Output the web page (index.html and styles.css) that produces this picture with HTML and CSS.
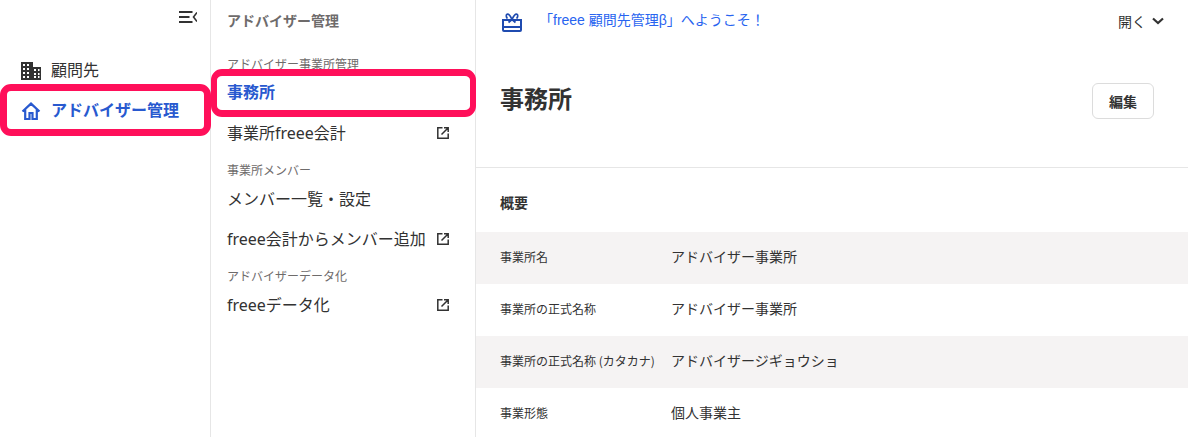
FILE: index.html
```html
<!DOCTYPE html>
<html lang="ja">
<head>
<meta charset="utf-8">
<title>事務所</title>
<link rel="stylesheet" href="styles.css">
</head>
<body>
<div class="app">
  <nav class="rail">
    <div class="rail-top">
      <svg class="collapse" width="18" height="14" viewBox="0 0 18 14"><path d="M0 2h13.500M0 7h10.500M0 12h13.500" stroke="#323232" stroke-width="2" fill="none"/><path d="M18 2.500 14.500 7l3.500 4.500" stroke="#323232" stroke-width="1.600" fill="none"/></svg>
    </div>
    <a class="rail-item">
      <svg class="rail-icon" width="20" height="18" viewBox="0 0 20 18"><path fill="#323232" fill-rule="evenodd" d="M0 0h12v5h8v13H0zM2 2v2h2V2zm4 0v2h2V2zM2 6v2h2V6zm4 0v2h2V6zm7 1v2h2V7zm4 0v2h1.500V7zM2 10v2h2v-2zm4 0v2h2v-2zm7 1v2h2v-2zm4 0v2h1.500v-2zM2 14v2h2v-2zm4 0v2h2v-2zm7 0v2h2v-2zm4 0v2h1.500v-2z"/></svg>
      <span>顧問先</span>
    </a>
    <a class="rail-item is-current">
      <svg class="rail-icon" width="20" height="18" viewBox="0 0 20 18"><path fill="none" stroke="#2859cf" stroke-width="2.200" d="M1.500 9.500 10 1.600l8.500 7.900M4.200 7.500V17h4.300v-6h3v6h4.300V7.500"/></svg>
      <span>アドバイザー管理</span>
    </a>
  </nav>
  <nav class="sub">
    <h2 class="sub-title">アドバイザー管理</h2>
    <p class="sub-group first">アドバイザー事業所管理</p>
    <a class="sub-item is-current"><span>事務所</span></a>
    <a class="sub-item"><span>事業所freee会計</span><svg class="ext" width="12" height="12" viewBox="0 0 12 12"><path d="M5.500.8H.8v10.400h10.400V6.500M7 .8h4.200V5M11 1 4.500 7.500" fill="none" stroke="#323232" stroke-width="1.500"/></svg></a>
    <p class="sub-group">事業所メンバー</p>
    <a class="sub-item"><span>メンバー一覧・設定</span></a>
    <a class="sub-item"><span>freee会計からメンバー追加</span><svg class="ext" width="12" height="12" viewBox="0 0 12 12"><path d="M5.500.8H.8v10.400h10.400V6.500M7 .8h4.200V5M11 1 4.500 7.500" fill="none" stroke="#323232" stroke-width="1.500"/></svg></a>
    <p class="sub-group">アドバイザーデータ化</p>
    <a class="sub-item"><span>freeeデータ化</span><svg class="ext" width="12" height="12" viewBox="0 0 12 12"><path d="M5.500.8H.8v10.400h10.400V6.500M7 .8h4.200V5M11 1 4.500 7.500" fill="none" stroke="#323232" stroke-width="1.500"/></svg></a>
  </nav>
  <main class="main">
    <div class="notice">
      <svg class="notice-icon" width="20" height="19" viewBox="0 0 20 19"><path fill="none" stroke="#1f4bb0" stroke-width="2" d="M1 7h18v10a1 1 0 0 1-1 1H2a1 1 0 0 1-1-1z"/><path fill="#1f4bb0" d="M1 13h18v2H1z"/><path fill="none" stroke="#1f4bb0" stroke-width="1.700" d="M10 6.500C8 2 6 .8 5 1.200S4 4.500 5.500 5.500M10 6.500C12 2 14 .8 15 1.200s1 3.300-.5 4.300M10 6.500 6.500 9.500M10 6.500l3.500 3"/></svg>
      <a class="notice-text">「freee 顧問先管理β」へようこそ！</a>
      <span class="notice-open">開く<svg width="12" height="8" viewBox="0 0 12 8"><path d="M1 1.500 6 6l5-4.500" fill="none" stroke="#323232" stroke-width="2.200"/></svg></span>
    </div>
    <header class="head">
      <h1>事務所</h1>
      <button class="edit">編集</button>
    </header>
    <section class="overview">
      <h3>概要</h3>
      <dl class="rows">
        <div class="row"><dt>事業所名</dt><dd>アドバイザー事業所</dd></div>
        <div class="row"><dt>事業所の正式名称</dt><dd>アドバイザー事業所</dd></div>
        <div class="row"><dt>事業所の正式名称 (カタカナ)</dt><dd>アドバイザージギョウショ</dd></div>
        <div class="row"><dt>事業形態</dt><dd>個人事業主</dd></div>
      </dl>
    </section>
  </main>
  <div class="mark mark-rail"></div>
  <div class="mark mark-sub"></div>
</div>
</body>
</html>
```

FILE: styles.css
```css
* { box-sizing: border-box; }
html, body { margin: 0; height: 100%; overflow: hidden; background: #fff; }
body { font-family: "Noto Sans CJK JP", "Noto Sans", sans-serif; color: #323232; }
.app { position: relative; display: flex; height: 437px; overflow: hidden; }

.rail { width: 211px; flex: none; border-right: 1px solid #e6e6e6; }
.rail-top { height: 51px; display: flex; justify-content: flex-end; padding: 10px 13px 0 0; }
.collapse { display: block; }
.rail-item { display: flex; align-items: center; gap: 10px; height: 36px; padding-left: 21px; font-size: 16px; margin-bottom: 4px; }
.rail-item.is-current { color: #2859cf; font-weight: 700; margin-top: 4px; }
.rail-icon { margin-top: 3px; }

.sub { width: 265px; flex: none; border-right: 1px solid #e6e6e6; padding: 10px 26px 0 16px; }
.sub-title { margin: 0 0 24px; font-size: 14px; line-height: 21px; font-weight: 700; color: #6e6b6b; }
.sub-group { margin: 0 0 -1px; font-size: 12px; line-height: 18px; color: #6e6b6b; padding-top: 9px; }
.sub-group.first { padding-top: 0; margin-bottom: 0; }
.sub-item { display: flex; align-items: center; justify-content: space-between; height: 40px; font-family: "Noto Sans", "Noto Sans CJK JP", sans-serif; font-size: 16px; }
.sub-item.is-current { color: #2859cf; font-weight: 700; height: 36px; margin-bottom: 3px; }
.ext { flex: none; margin-top: 2px; }

.main { flex: 1; min-width: 0; }
.notice { display: flex; align-items: center; height: 43px; padding: 0 24px 0 26px; }
.notice-icon { margin-top: 2px; }
.notice-text { margin-left: 17px; font-family: "Liberation Sans", "Noto Sans CJK JP", sans-serif; font-size: 14px; line-height: 21px; color: #2864f0; flex: 1; margin-bottom: 3px; }
.notice-open { display: flex; align-items: center; gap: 6px; font-size: 14px; margin-top: -1px; }
.head { display: flex; align-items: center; justify-content: space-between; height: 125px; padding: 0 34px 9px 24px; border-bottom: 1px solid #e6e6e6; }
.head h1 { margin: 0; padding-bottom: 6px; font-size: 24px; font-weight: 700; line-height: 36px; }
.edit { width: 62px; height: 36px; background: #fff; border: 1px solid #dcdcdc; border-radius: 6px; font: 700 14px "Noto Sans CJK JP", sans-serif; color: #323232; padding: 0; }
.overview h3 { margin: 0; padding: 24px 24px 0; height: 64px; font-size: 14px; line-height: 21px; font-weight: 700; }
.rows { margin: 0; }
.row { display: flex; align-items: center; height: 52px; padding: 0 0 3px 24px; }
.row:nth-child(odd) { background: #f5f3f3; }
.row dt { width: 171px; flex: none; font-size: 12px; }
.row dd { margin: 0 0 2px; font-size: 14px; }

.mark { position: absolute; border: 7px solid #ff0f5a; border-radius: 11px; pointer-events: none; }
.mark-rail { left: 0; top: 84px; width: 211px; height: 52px; }
.mark-sub { left: 211px; top: 69px; width: 265px; height: 48px; border-width: 7px 6px; }
```
